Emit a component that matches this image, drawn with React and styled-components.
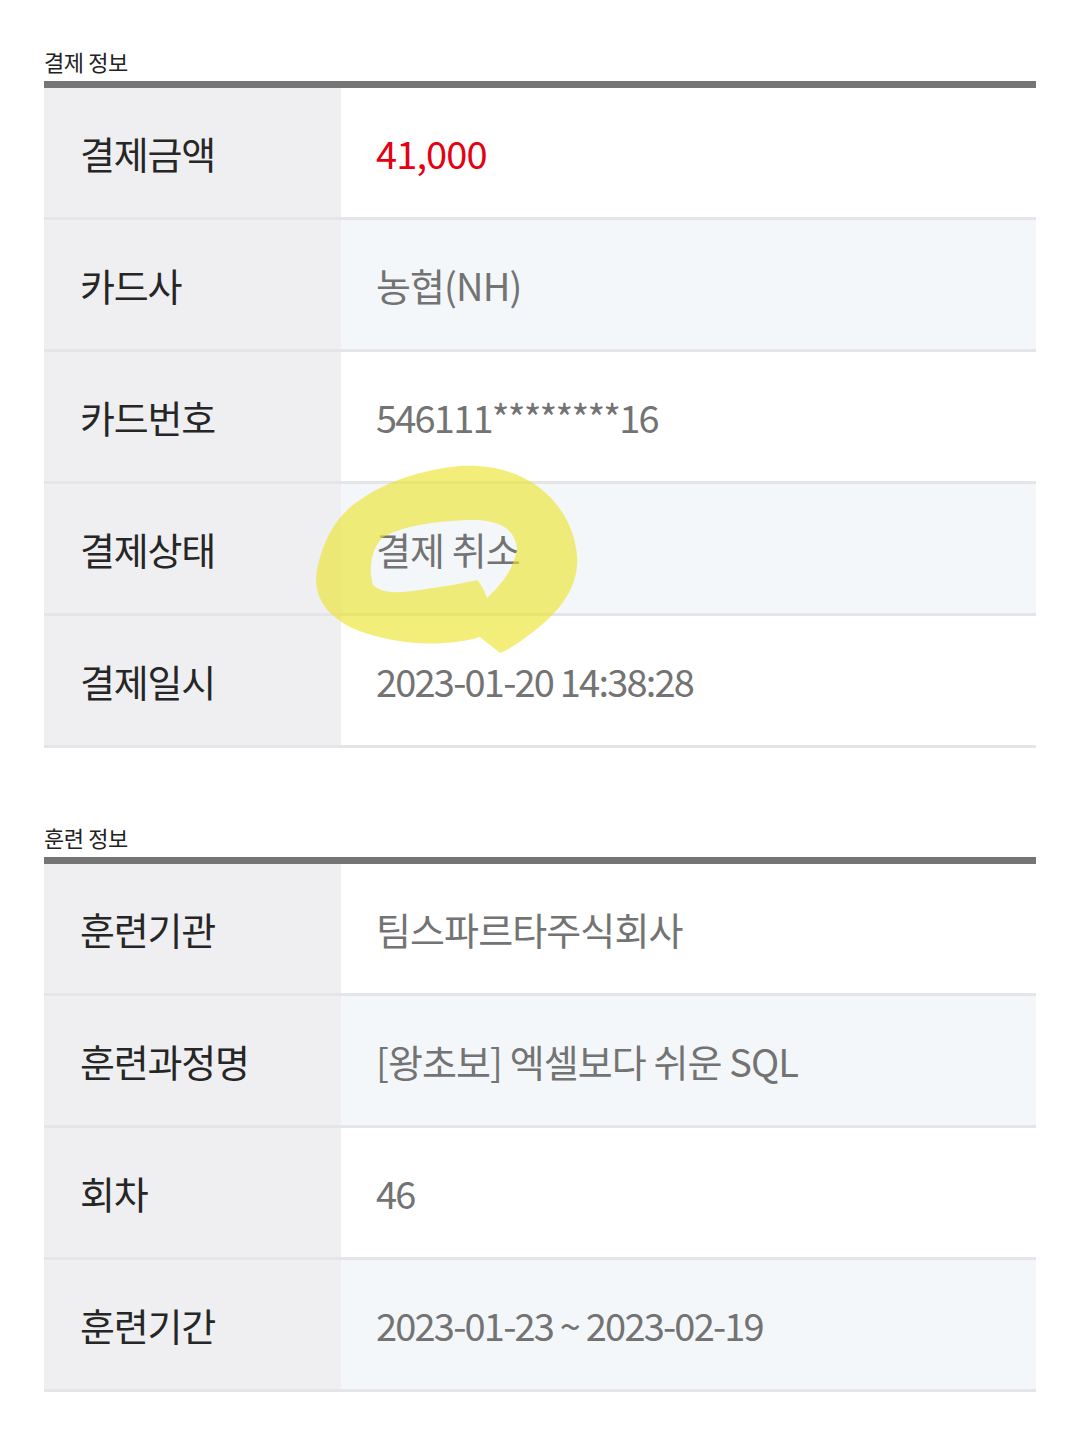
import React from "react";
import styled, { createGlobalStyle } from "styled-components";

const payment = [
  { label: "결제금액", value: "41,000", accent: true },
  { label: "카드사", value: "농협(NH)" },
  { label: "카드번호", value: "546111********16", tight: true },
  { label: "결제상태", value: "결제 취소", marked: true },
  { label: "결제일시", value: "2023-01-20 14:38:28", tight: true },
];

const training = [
  { label: "훈련기관", value: "팀스파르타주식회사" },
  { label: "훈련과정명", value: "[왕초보] 엑셀보다 쉬운 SQL" },
  { label: "회차", value: "46", tight: true },
  { label: "훈련기간", value: "2023-01-23 ~ 2023-02-19", tight: true },
];

const Marker = () => (
  <MarkerSvg viewBox="300 455 300 210" width="300" height="210">
    <path
      fillRule="evenodd"
      d="M460 466 C530 462 572 505 577 555 C580 590 555 615 533 632 C520 642 508 650 500 653 C494 648 486 642 480 637 C450 646 400 648 352 628 C320 612 312 590 318 565 C324 540 336 515 360 500 C385 482 420 470 460 466 Z
         M373 585 C368 568 372 548 382 538 C400 526 440 520 475 520 C500 521 514 528 517 548 C514 570 500 586 487 598 C484 590 481 584 477 580 C460 584 440 587 420 590 C400 593 382 594 373 585 Z"
      fill="rgba(236, 228, 40, 0.62)"
    />
  </MarkerSvg>
);

const InfoTable = ({ title, rows }) => (
  <Section>
    <SectionTitle>{title}</SectionTitle>
    <Table>
      {rows.map((row, i) => (
        <Row key={row.label}>
          <LabelCell>{row.label}</LabelCell>
          <ValueCell $shaded={i % 2 === 1}>
            <ValueText $accent={row.accent} $tight={row.tight}>
              {row.value}
            </ValueText>
            {row.marked && <Marker />}
          </ValueCell>
        </Row>
      ))}
    </Table>
  </Section>
);

const App = () => (
  <>
    <GlobalStyle />
    <Page>
      <InfoTable title="결제 정보" rows={payment} />
      <InfoTable title="훈련 정보" rows={training} />
    </Page>
  </>
);

export default App;

const GlobalStyle = createGlobalStyle`
  body {
    margin: 0;
    background: #ffffff;
    font-family: "Noto Sans CJK KR", "Noto Sans", sans-serif;
  }
`;

const Page = styled.div`
  width: 1080px;
  box-sizing: border-box;
  padding: 47px 44px 0;
  display: flex;
  flex-direction: column;
  gap: 75px;
`;

const Section = styled.section`
  display: flex;
  flex-direction: column;
`;

const SectionTitle = styled.h3`
  margin: 0 0 6px;
  font-size: 22px;
  line-height: 28px;
  font-weight: 400;
  color: #222222;
  letter-spacing: -0.4px;
`;

const Table = styled.div`
  border-top: 7px solid #757575;
`;

const Row = styled.div`
  display: grid;
  grid-template-columns: 297px 1fr;
  height: 132px;
  box-sizing: border-box;
  border-bottom: 3px solid #e5e5e8;
`;

const LabelCell = styled.div`
  display: flex;
  align-items: center;
  padding-left: 36px;
  background: #efeff1;
  color: #262626;
  font-size: 38px;
  letter-spacing: -1.2px;
`;

const ValueCell = styled.div`
  position: relative;
  display: flex;
  align-items: center;
  padding-left: 35px;
  background: ${(p) => (p.$shaded ? "#f4f7fa" : "#ffffff")};
`;

const ValueText = styled.span`
  font-size: 38px;
  letter-spacing: ${(p) => (p.$tight ? "-1.8px" : "-0.9px")};
  color: ${(p) => (p.$accent ? "#e50012" : "#737373")};
`;

const MarkerSvg = styled.svg`
  position: absolute;
  left: -41px;
  top: -29px;
  z-index: 2;
  pointer-events: none;
`;
